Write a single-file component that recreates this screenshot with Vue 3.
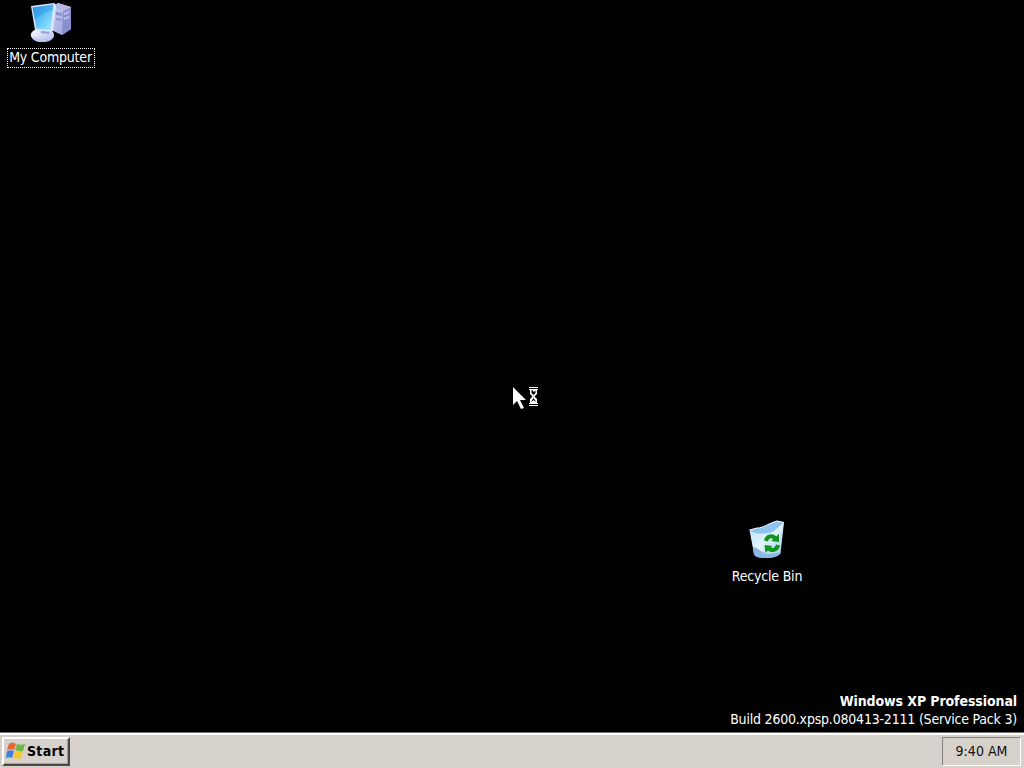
<script setup>
const icons = [
  { id: 'computer', label: 'My Computer', selected: true },
  { id: 'recycle', label: 'Recycle Bin', selected: false },
];
const clock = '9:40 AM';
</script>

<template>
  <div class="screen">
    <main class="desktop">
      <div v-for="icon in icons" :key="icon.id" class="icon" :class="icon.id">
        <svg v-if="icon.id === 'computer'" class="icon-art" width="44" height="44" viewBox="0 0 44 44">
          <defs>
            <linearGradient id="glass" x1="0" y1="0" x2="1" y2="1">
              <stop offset="0" stop-color="#2f96e4" />
              <stop offset=".5" stop-color="#5fc4f8" />
              <stop offset="1" stop-color="#a6ebff" />
            </linearGradient>
            <linearGradient id="tower" x1="0" y1="0" x2="1" y2="1">
              <stop offset="0" stop-color="#c9cef4" />
              <stop offset="1" stop-color="#9aa0dc" />
            </linearGradient>
            <linearGradient id="stand" x1="0" y1="0" x2="1" y2="1">
              <stop offset="0" stop-color="#fff" />
              <stop offset="1" stop-color="#a8b4ea" />
            </linearGradient>
          </defs>
          <path d="m23 7 6-4 13 4v22l-9 6-11-5z" fill="url(#tower)" />
          <path d="m34 11 8-4v22l-9 6z" fill="#8a8fcf" />
          <path d="m24 7 5-4 13 4-8 4z" fill="#b5b9e6" />
          <path d="m27 12 6 1v3l-6-1zm0 6 6 1v2l-6-1z" fill="#8b92ce" />
          <path d="m35 13 5-2v2l-5 2zm0 5 5-2v2l-5 2z" fill="#c0c4ee" />
          <path d="M9 29c-5 1-8 4-7 7 2 6 14 8 20 4 3-2 4-5 2-8l-5-3z" fill="url(#stand)" />
          <path d="M2 36c4 4 16 4 22-1 0 7-19 11-22 1z" fill="#bdc5f0" />
          <path d="m12 30 9 1-1 3-8-1z" fill="#98a3de" />
          <path d="m2 6 23-3 2 2-3 26-3 1-15-2z" fill="#d3e4fc" />
          <path d="m3.500 7.500 21-3-3 25.500-14-1.500z" fill="url(#glass)" />
          <path d="m3.500 7.500 21-3-1 5.500C16 12 11 15 6 20z" fill="#1b86dd" opacity=".3" />
          <path d="m25 3 2 2-3 26-2.500 1z" fill="#dfe6fb" />
        </svg>
        <svg v-else class="icon-art" width="44" height="44" viewBox="0 0 44 44">
          <defs>
            <linearGradient id="bin" x1="0" y1="0" x2="1" y2="1">
              <stop offset="0" stop-color="#b4dcfa" />
              <stop offset=".5" stop-color="#e2f5ff" />
              <stop offset="1" stop-color="#9bc2e4" />
            </linearGradient>
          </defs>
          <path d="M4.500 11 12 9c7 0 12-5 20-7l7 1.500L35.500 34.500C32 38 28 39 21 39c-6 0-11-1-12-4z" fill="url(#bin)" />
          <path d="M5 11.500 12 9c7 0 12-5 20-7l6.500 2c-5 3-8 9-15 10-7 1-13 1-18.500-2.500z" fill="#8fc4f2" />
          <path d="M4.500 11 12 9c7 0 12-5 20-7l7 1.500" fill="none" stroke="#e9f7ff" />
          <path d="M8 28c5 0 8 6 14 7l13-1c-3 6-25 7-26 1z" fill="#8bb5e6" />
          <path d="M21 22c1-5 6-6 9-3" fill="none" stroke="#139320" stroke-width="4" />
          <path d="m26 22 8-7v8z" fill="#139320" />
          <path d="M33 26c-1 5-6 6-9 4" fill="none" stroke="#139320" stroke-width="4" />
          <path d="m19.500 26 8 1-7 7z" fill="#139320" />
        </svg>
        <span class="label" :class="{ selected: icon.selected }">{{ icon.label }}</span>
      </div>

      <svg class="cursor" width="28" height="26" viewBox="0 0 28 26">
        <path d="M1 1v18l4-4 4 8 3-1-4-8h6z" fill="#fff" />
        <path d="M17 1h9v3h-1v4l-2.500 2.500L25 13v4h1v3h-9v-3h1v-4l2.500-2.500L18 8V4h-1z" fill="#fff" />
        <path d="M17 2.500h9M17 18.500h9" stroke="#000" />
        <path d="M19.500 4h4v3l-2 2-2-2zm2 8 2 3v1l-2-2-2 2v-1z" fill="#000" />
        <path d="M19.500 4h1v1h1v1h1V5h1V4z" fill="#fff" />
      </svg>

      <div class="version">
        <strong>Windows XP Professional</strong>
        <span class="build">Build 2600.xpsp.080413-2111 (Service Pack 3)</span>
      </div>
    </main>

    <footer class="taskbar">
      <button class="start">
        <svg width="20" height="20" viewBox="0 0 20 20">
          <path d="M3 3c3-2 5-1 7 0L8 9C6 8 4 8 1 9z" fill="#e66831" />
          <path d="M11 3c3 1 5 1 8 0l-2 7c-3 1-5 0-8-1z" fill="#72b746" />
          <path d="M1 10c3-1 5-1 7 0l-2 7c-2-1-4-1-6 0z" fill="#3d7ee1" />
          <path d="M9 10c3 1 5 1 8 0l-2 7c-3 1-5 1-8 0z" fill="#f5c82d" />
        </svg>
        <span>Start</span>
      </button>
      <div class="tray">{{ clock }}</div>
    </footer>
  </div>
</template>

<style>
body {
  margin: 0;
  background: #000;
}
</style>

<style scoped>
.screen {
  display: flex;
  flex-direction: column;
  width: 1024px;
  height: 768px;
  overflow: hidden;
  font-family: "DejaVu Sans Condensed", "DejaVu Sans", sans-serif;
  font-stretch: condensed;
  font-size: 14px;
  letter-spacing: -0.2px;
  color: #fff;
  cursor: default;
}

.desktop {
  position: relative;
  display: flex;
  flex: 1;
  align-items: flex-end;
  justify-content: flex-end;
  background: #000;
}

.icon {
  position: absolute;
  display: flex;
  flex-direction: column;
  align-items: center;
  width: 88px;
}

.computer {
  left: 7px;
  top: 0;
}

.recycle {
  left: 723px;
  top: 519px;
}

.icon-art {
  display: block;
}

.label {
  box-sizing: border-box;
  height: 20px;
  margin-top: 4px;
  padding: 0 1px;
  border: 1px solid transparent;
  line-height: 17px;
  white-space: nowrap;
}

.recycle .label {
  margin-top: 3px;
  line-height: 18px;
}

.label.selected {
  padding: 0 2px 0 1px;
  border: 1px dotted #fff;
}

.cursor {
  position: absolute;
  left: 512px;
  top: 386px;
}

.version {
  display: flex;
  flex-direction: column;
  align-items: flex-end;
  padding: 0 7px 4px 0;
  line-height: 18px;
  white-space: nowrap;
}

.version strong {
  letter-spacing: -0.1px;
}

.taskbar {
  box-sizing: border-box;
  display: flex;
  justify-content: space-between;
  height: 36px;
  padding: 4px 3px 3px 2px;
  border-top: 1px solid #77736f;
  box-shadow: inset 0 2px #fff;
  background: #d6d1cb;
  color: #111;
}

.start {
  box-sizing: border-box;
  display: flex;
  align-items: center;
  gap: 1px;
  width: 68px;
  height: 29px;
  padding: 0 0 2px 2px;
  border: 2px solid;
  border-color: #fff #4c4945 #4c4945 #fff;
  box-shadow: inset -1px -1px #a5a09a;
  background: #d6d1cb;
  color: #000;
  font-family: inherit;
  font-stretch: inherit;
  font-size: 14px;
  font-weight: bold;
  letter-spacing: 0.3px;
}

.tray {
  box-sizing: border-box;
  display: flex;
  align-items: center;
  justify-content: center;
  width: 79px;
  height: 29px;
  padding-bottom: 2px;
  border: 1px solid;
  border-color: #85817d #fff #fff #85817d;
  letter-spacing: 0;
}
</style>
